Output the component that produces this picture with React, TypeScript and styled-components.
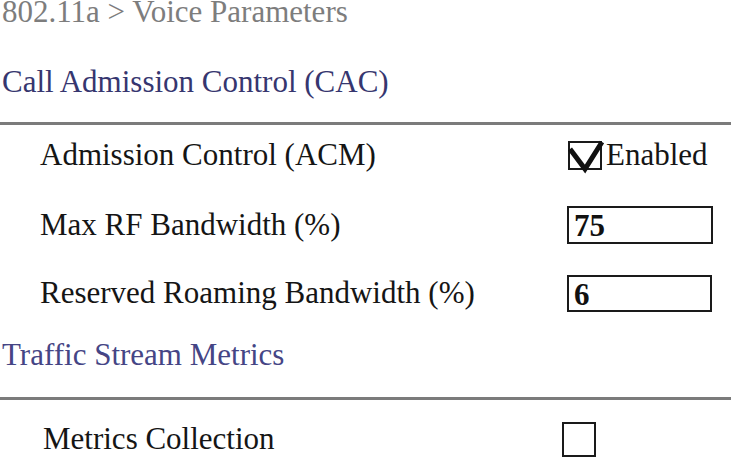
import React from 'react';
import styled, { createGlobalStyle } from 'styled-components';

const GlobalStyle = createGlobalStyle`
  html, body {
    margin: 0;
    padding: 0;
    background: #ffffff;
  }
  body {
    font-family: 'Liberation Serif', 'Times New Roman', serif;
    overflow: hidden;
  }
`;

const Page = styled.div`
  width: 731px;
  height: 458px;
  overflow: hidden;
`;

const Breadcrumb = styled.div`
  padding-left: 2px;
  font-size: 31px;
  line-height: 24px;
  color: #7d7d7d;
`;

const SectionTitle = styled.div<{ $top: number; $tone?: string }>`
  margin-top: ${(p) => p.$top}px;
  padding-left: 2px;
  font-size: 31px;
  line-height: 36px;
  color: ${(p) => p.$tone ?? '#36366f'};
`;

const Rule = styled.div<{ $top: number }>`
  margin-top: ${(p) => p.$top}px;
  height: 3px;
  background: #7b7b7b;
`;

const Row = styled.div<{ $height: number; $indent: number; $controlX: number }>`
  display: grid;
  grid-template-columns: ${(p) => p.$controlX - p.$indent}px 1fr;
  align-items: center;
  height: ${(p) => p.$height}px;
  padding-left: ${(p) => p.$indent}px;
  box-sizing: border-box;
`;

const Label = styled.div`
  font-size: 31px;
  line-height: 36px;
  color: #151515;
  white-space: nowrap;
`;

const Control = styled.div`
  display: flex;
  align-items: center;
  gap: 4px;
`;

const Box = styled.span<{ $h: number }>`
  position: relative;
  display: inline-block;
  width: 34px;
  height: ${(p) => p.$h}px;
  border: 2px solid #1a1a1a;
  box-sizing: border-box;
  background: #ffffff;
`;

const Tick = styled.svg`
  position: absolute;
  left: -2px;
  top: -2px;
  overflow: visible;
`;

const Text = styled.span`
  font-size: 31px;
  line-height: 36px;
  color: #151515;
`;

const Field = styled.div<{ $h: number; $w: number }>`
  width: ${(p) => p.$w}px;
  height: ${(p) => p.$h}px;
  border: 2px solid #1a1a1a;
  box-sizing: border-box;
  font-size: 31px;
  font-weight: bold;
  color: #111111;
  padding-left: 5px;
  line-height: ${(p) => p.$h - 2}px;
  overflow: hidden;
`;

const App: React.FunctionComponent = () => {
  return (
    <Page>
      <GlobalStyle />
      <Breadcrumb>802.11a &gt; Voice Parameters</Breadcrumb>
      <SectionTitle $top={40}>Call Admission Control (CAC)</SectionTitle>
      <Rule $top={22} />
      <Row $height={60} $indent={40} $controlX={568}>
        <Label>Admission Control (ACM)</Label>
        <Control>
          <Box $h={29}>
            <Tick width="34" height="29" viewBox="0 0 34 29">
              <path d="M2 8 L17 28 L34 1" fill="none" stroke="#111" strokeWidth="5" strokeLinejoin="miter" />
            </Tick>
          </Box>
          <Text>Enabled</Text>
        </Control>
      </Row>
      <Row $height={80} $indent={40} $controlX={567}>
        <Label>Max RF Bandwidth (%)</Label>
        <Control>
          <Field $w={146} $h={38}>75</Field>
        </Control>
      </Row>
      <Row $height={56} $indent={40} $controlX={567}>
        <Label>Reserved Roaming Bandwidth (%)</Label>
        <Control>
          <Field $w={145} $h={37}>6</Field>
        </Control>
      </Row>
      <SectionTitle $top={16} $tone="#454585">Traffic Stream Metrics</SectionTitle>
      <Rule $top={24} />
      <Row $height={78} $indent={43} $controlX={562}>
        <Label>Metrics Collection</Label>
        <Control>
          <Box $h={35} />
        </Control>
      </Row>
    </Page>
  );
};

export default App;
